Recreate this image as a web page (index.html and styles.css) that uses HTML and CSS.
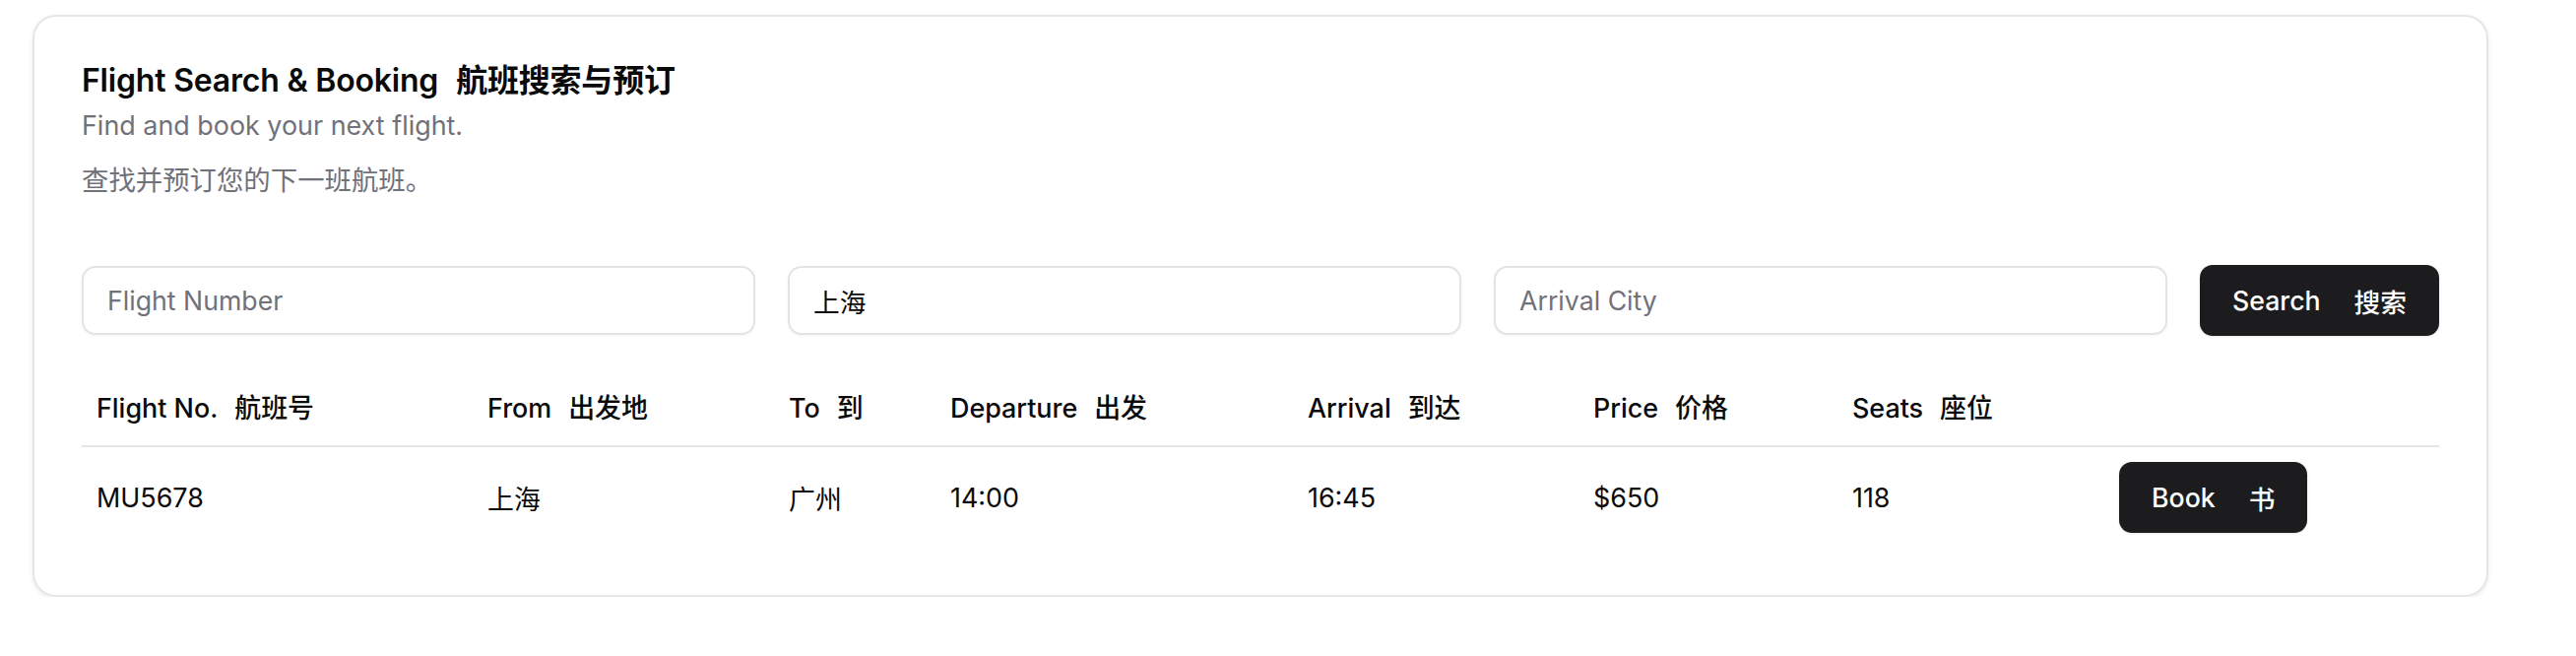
FILE: index.html
```html
<!DOCTYPE html>
<html lang="en">
<head>
<meta charset="utf-8">
<title>Flight Search &amp; Booking</title>
<link rel="stylesheet" href="styles.css">
</head>
<body>
  <div class="card">
    <header class="card-header">
      <h1 class="title">Flight Search &amp; Booking<span class="zh">航班搜索与预订</span></h1>
      <p class="desc">Find and book your next flight.</p>
      <p class="desc desc-zh">查找并预订您的下一班航班。</p>
    </header>
    <div class="search-row">
      <input class="field" type="text" placeholder="Flight Number">
      <input class="field" type="text" value="上海">
      <input class="field" type="text" placeholder="Arrival City">
      <button class="btn btn-search" type="button">Search<span class="zh-btn">搜索</span></button>
    </div>
    <table class="flights">
      <colgroup>
        <col class="c1"><col class="c2"><col class="c3"><col class="c4">
        <col class="c5"><col class="c6"><col class="c7"><col class="c8">
      </colgroup>
      <thead>
        <tr>
          <th>Flight No.<span class="zh-th">航班号</span></th>
          <th>From<span class="zh-th">出发地</span></th>
          <th>To<span class="zh-th">到</span></th>
          <th>Departure<span class="zh-th">出发</span></th>
          <th>Arrival<span class="zh-th">到达</span></th>
          <th>Price<span class="zh-th">价格</span></th>
          <th>Seats<span class="zh-th">座位</span></th>
          <th></th>
        </tr>
      </thead>
      <tbody>
        <tr>
          <td>MU5678</td>
          <td>上海</td>
          <td>广州</td>
          <td>14:00</td>
          <td>16:45</td>
          <td>$650</td>
          <td>118</td>
          <td><button class="btn btn-book" type="button">Book<span class="zh-btn">书</span></button></td>
        </tr>
      </tbody>
    </table>
  </div>
</body>
</html>
```

FILE: styles.css
```css
* { box-sizing: border-box; }

html, body {
  margin: 0;
  padding: 0;
  background: #ffffff;
}

body {
  font-family: Inter, "Noto Sans CJK SC", sans-serif;
  color: #0a0a0a;
  padding: 15px 0 0 33px;
}

.card {
  width: 2494px;
  border: 2px solid #e6e6e6;
  border-radius: 24px;
  background: #ffffff;
  box-shadow: 0 2px 5px rgba(0, 0, 0, 0.08);
  padding: 48px;
}

.card-header {
  display: flex;
  flex-direction: column;
}

.title {
  margin: 0;
  font-size: 32px;
  line-height: 34px;
  font-weight: 600;
  letter-spacing: -0.2px;
}

.title .zh { margin-left: 18px; }

.desc {
  margin: 8px 0 0;
  font-size: 26.9px;
  line-height: 40px;
  color: #71717a;
}

.desc-zh {
  margin-top: 16px;
  font-size: 27.4px;
}

.search-row {
  display: flex;
  align-items: center;
  gap: 33px;
  margin-top: 66px;
}

.field {
  flex: 1 1 0;
  min-width: 0;
  height: 70px;
  border: 2px solid #e4e4e7;
  border-radius: 14px;
  padding: 0 24px;
  font-family: Inter, "Noto Sans CJK SC", sans-serif;
  font-size: 26.7px;
  color: #0a0a0a;
  background: #ffffff;
  box-shadow: 0 1px 3px rgba(0, 0, 0, 0.05);
  outline: none;
}

.field::placeholder { color: #71717a; }

.btn {
  display: inline-flex;
  align-items: center;
  height: 72px;
  padding: 0 33px;
  border: none;
  border-radius: 13px;
  background: #1c1c1e;
  color: #ffffff;
  font-family: Inter, "Noto Sans CJK SC", sans-serif;
  font-size: 26.7px;
  font-weight: 500;
  white-space: nowrap;
  box-shadow: 0 1px 3px rgba(0, 0, 0, 0.1);
}

.btn-search { flex: 0 0 auto; }

.zh-btn { margin-left: 34px; }

.flights {
  width: 100%;
  margin-top: 32px;
  border-collapse: collapse;
  table-layout: fixed;
  font-size: 26.9px;
}

.c1 { width: 397px; }
.c2 { width: 306px; }
.c3 { width: 164px; }
.c4 { width: 363px; }
.c5 { width: 290px; }
.c6 { width: 263px; }
.c7 { width: 271px; }
.c8 { width: 340px; }

.flights th {
  height: 80px;
  padding: 0 0 0 15px;
  text-align: left;
  font-weight: 500;
  border-bottom: 2px solid #e5e5e5;
  white-space: nowrap;
}

.zh-th { margin-left: 17px; }

.flights td {
  height: 103px;
  padding: 0 0 0 15px;
  font-weight: 400;
  white-space: nowrap;
  vertical-align: middle;
}
```
